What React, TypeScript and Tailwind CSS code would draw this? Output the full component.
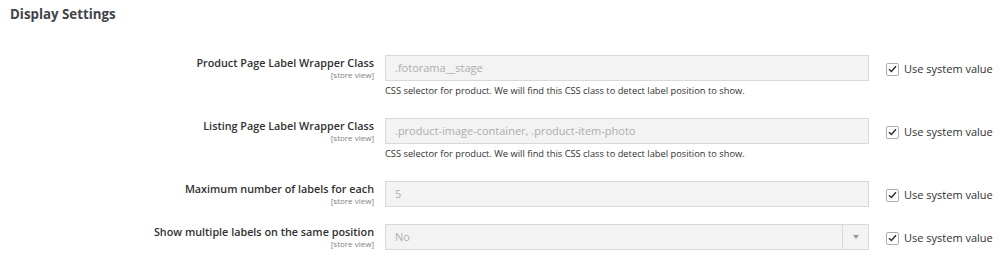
import React from "react";

const font = { fontFamily: '"Open Sans", "Noto Sans", sans-serif' };

function Check() {
  return (
    <label className="flex items-center gap-[5px] text-[11px] text-[#303030] whitespace-nowrap">
      <span className="w-[13px] h-[13px] border border-[#adadad] rounded-[2px] bg-white flex items-center justify-center">
        <svg width="9" height="8" viewBox="0 0 9 8">
          <path d="M1 4.2 L3.4 6.5 L8 1.3" fill="none" stroke="#303030" strokeWidth="1.5" />
        </svg>
      </span>
      <span>Use system value</span>
    </label>
  );
}

function Row({
  label,
  value,
  help,
  select,
}: {
  label: string;
  value: string;
  help?: string;
  select?: boolean;
}) {
  return (
    <div className="flex items-start">
      <div className="w-[374px] text-right">
        <div className="text-[10.8px] font-semibold text-[#303030] leading-[15px] whitespace-nowrap">{label}</div>
        <div className="text-[8px] text-[#808080] leading-[9px]">[store view]</div>
      </div>
      <div className="ml-[11px] w-[484px]">
        <div className="h-[26px] border border-[#d9d9d9] bg-[#f3f3f3] flex items-center text-[11px] text-[#adadad] relative">
          <span className="pl-[9px]">{value}</span>
          {select && (
            <div className="absolute right-0 top-0 bottom-0 w-[26px] border-l border-[#d9d9d9] flex items-center justify-center">
              <svg width="6" height="4" viewBox="0 0 6 4">
                <path d="M0 0 H6 L3 4 Z" fill="#999" />
              </svg>
            </div>
          )}
        </div>
        {help && (
          <div className="text-[9.3px] text-[#303030] mt-[4px] leading-[12px] whitespace-nowrap">{help}</div>
        )}
      </div>
      <div className="ml-[17px] pt-[6px]">
        <Check />
      </div>
    </div>
  );
}

export default function App() {
  const help =
    "CSS selector for product. We will find this CSS class to detect label position to show.";
  return (
    <div className="w-[1000px] h-[255px] bg-white overflow-hidden" style={font}>
      <div className="pl-[10px] pt-[4px] text-[13.3px] font-bold text-[#41434a] leading-[20px]">Display Settings</div>
      <div className="mt-[31px] flex flex-col">
        <div className="mb-[21px]">
          <Row label="Product Page Label Wrapper Class" value=".fotorama__stage" help={help} />
        </div>
        <div className="mb-[21px]">
          <Row
            label="Listing Page Label Wrapper Class"
            value=".product-image-container, .product-item-photo"
            help={help}
          />
        </div>
        <div className="mb-[17px]">
          <Row label="Maximum number of labels for each" value="5" />
        </div>
        <Row label="Show multiple labels on the same position" value="No" select />
      </div>
    </div>
  );
}
